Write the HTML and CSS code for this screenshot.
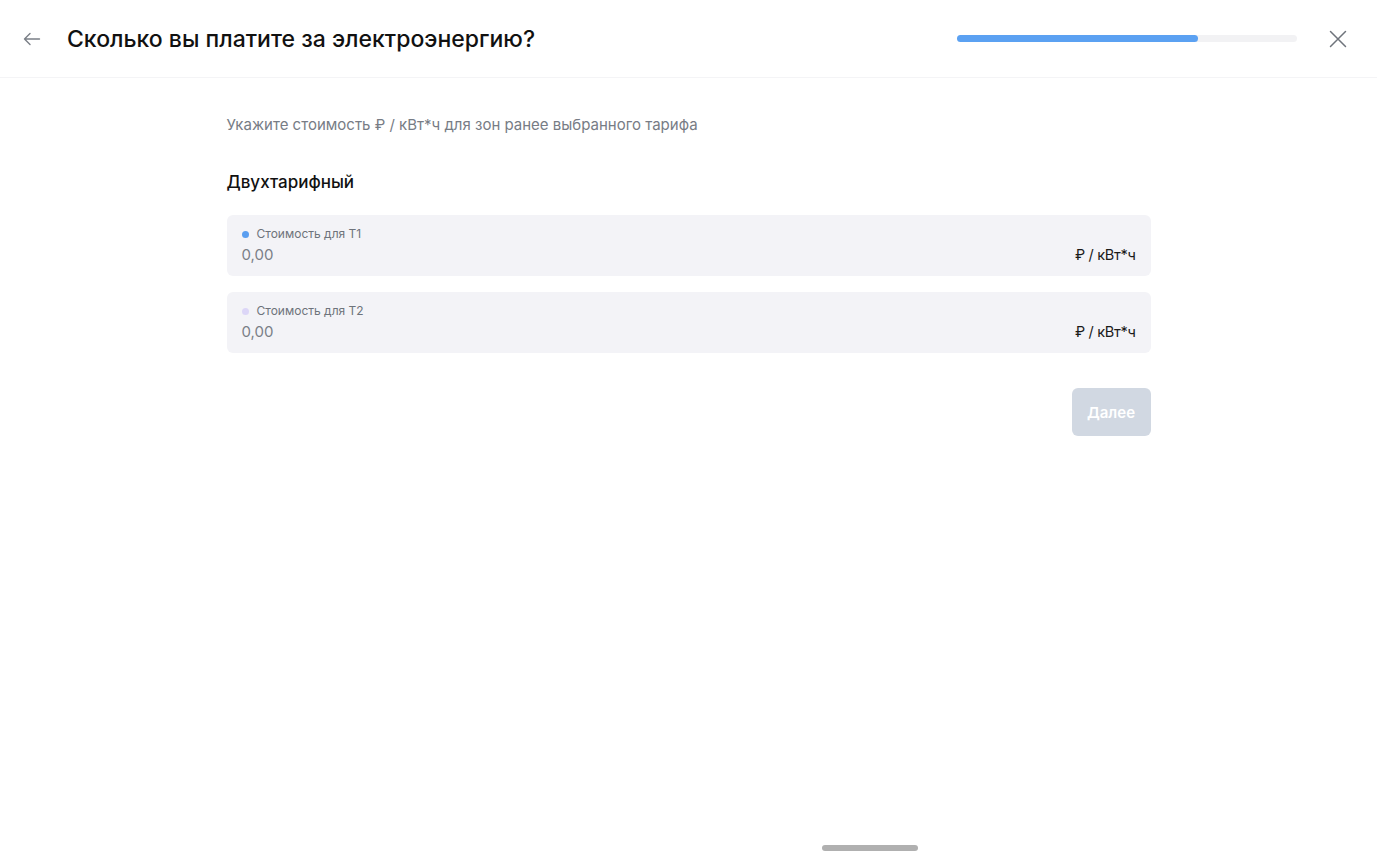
FILE: index.html
```html
<!DOCTYPE html>
<html lang="ru">
<head>
<meta charset="utf-8">
<link rel="stylesheet" href="styles.css">
</head>
<body>
<div class="page">
  <header class="header">
    <button class="icon-btn back" aria-label="Назад">
      <svg width="18" height="14" viewBox="0 0 18 14" fill="none" stroke="#7a7f87" stroke-width="1.4" stroke-linecap="round" stroke-linejoin="round"><path d="M16.5 7H1.5M7 1.5L1.5 7L7 12.5"/></svg>
    </button>
    <h1 class="title">Сколько вы платите за электроэнергию?</h1>
    <div class="progress"><div class="progress-fill" style="width:71%"></div></div>
    <button class="icon-btn close" aria-label="Закрыть">
      <svg width="18" height="18" viewBox="0 0 18 18" fill="none" stroke="#6f747c" stroke-width="1.5" stroke-linecap="round"><path d="M1.5 1.5L16.5 16.5M16.5 1.5L1.5 16.5"/></svg>
    </button>
  </header>
  <main class="content">
    <p class="hint">Укажите стоимость ₽ / кВт*ч для зон ранее выбранного тарифа</p>
    <h2 class="section">Двухтарифный</h2>
    <div class="field">
      <div class="field-main">
        <div class="label"><span class="dot dot-t1"></span>Стоимость для Т1</div>
        <div class="value">0,00</div>
      </div>
      <div class="unit">₽ / кВт*ч</div>
    </div>
    <div class="field">
      <div class="field-main">
        <div class="label"><span class="dot dot-t2"></span>Стоимость для Т2</div>
        <div class="value">0,00</div>
      </div>
      <div class="unit">₽ / кВт*ч</div>
    </div>
    <div class="actions">
      <button class="next" disabled>Далее</button>
    </div>
  </main>
  <div class="home-indicator"></div>
</div>
</body>
</html>
```

FILE: styles.css
```css
* { box-sizing: border-box; }
html, body { margin: 0; padding: 0; background: #fff; }
body {
  font-family: Inter, "Noto Sans", "Liberation Sans", sans-serif;
  color: #111;
  width: 1377px;
  height: 852px;
  overflow: hidden;
}
.page {
  height: 852px;
  display: flex;
  flex-direction: column;
}
.header {
  height: 78px;
  flex: none;
  display: flex;
  align-items: center;
  border-bottom: 1px solid #f4f4f6;
  padding: 0 22px 0 22px;
}
.icon-btn {
  background: none;
  border: 0;
  padding: 0;
  display: flex;
  align-items: center;
  justify-content: center;
  cursor: pointer;
}
.back { width: 20px; height: 20px; margin-right: 25px; }
.title {
  margin: 0;
  font-size: 23px;
  font-weight: 500;
  color: #111;
  flex: 1;
}
.progress {
  width: 340px;
  height: 7px;
  border-radius: 4px;
  background: #f2f2f4;
  margin-right: 32px;
}
.progress-fill {
  height: 100%;
  border-radius: 4px;
  background: #5ba1f2;
}
.close { width: 18px; height: 18px; margin-right: 8px; }
.content {
  width: 924px;
  margin: 0 auto;
  padding-top: 37px;
  display: flex;
  flex-direction: column;
  flex: 1;
}
.hint {
  margin: 0;
  font-size: 15px;
  line-height: 20px;
  color: #777c85;
}
.section {
  margin: 36px 0 22px;
  font-size: 17px;
  line-height: 22px;
  font-weight: 500;
  color: #111;
}
.field {
  height: 61px;
  background: #f3f3f7;
  border-radius: 6px;
  display: flex;
  align-items: flex-end;
  justify-content: space-between;
  padding: 0 15px 11px 15px;
  margin-bottom: 16px;
}
.label {
  display: flex;
  align-items: center;
  font-size: 12px;
  line-height: 16px;
  color: #6e737b;
  margin-bottom: 3px;
}
.dot {
  width: 7px;
  height: 7px;
  border-radius: 50%;
  margin-right: 8px;
}
.dot-t1 { background: #5a9ef0; }
.dot-t2 { background: #dcd6f7; }
.value {
  font-size: 15px;
  line-height: 20px;
  color: #7a7f87;
}
.unit {
  font-size: 14.5px;
  line-height: 20px;
  letter-spacing: -0.3px;
  color: #1a1a1a;
}
.actions {
  display: flex;
  justify-content: flex-end;
  margin-top: 19px;
}
.next {
  width: 79px;
  height: 48px;
  border: 0;
  border-radius: 6px;
  background: #d1d8e2;
  color: #fff;
  font-family: inherit;
  font-size: 15px;
  font-weight: 600;
}
.home-indicator {
  width: 96px;
  height: 6px;
  border-radius: 3px;
  background: #b0b0b0;
  margin: 0 0 1px 822px;
  flex: none;
}
```
